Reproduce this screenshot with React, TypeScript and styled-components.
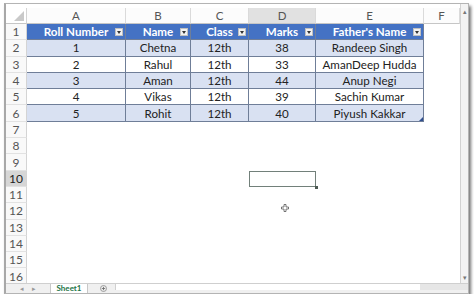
import React from "react";
import styled, { createGlobalStyle, css } from "styled-components";

const GlobalStyle = createGlobalStyle`
  html, body {
    margin: 0;
    padding: 0;
    background: #ffffff;
  }
  body {
    font-family: "Lato", "Liberation Sans", sans-serif;
  }
`;

const columns = ["A", "B", "C", "D", "E", "F"];
const headers = ["Roll Number", "Name", "Class", "Marks", "Father's Name"];
const rows = [
  ["1", "Chetna", "12th", "38", "Randeep Singh"],
  ["2", "Rahul", "12th", "33", "AmanDeep Hudda"],
  ["3", "Aman", "12th", "44", "Anup Negi"],
  ["4", "Vikas", "12th", "39", "Sachin Kumar"],
  ["5", "Rohit", "12th", "40", "Piyush Kakkar"],
];
const TOTAL_ROWS = 16;
const ACTIVE_ROW = 10;
const ACTIVE_COL = 3;

const App = () => {
  return (
    <>
      <GlobalStyle />
      <Frame>
        <Main>
          <Sheet>
            <Corner>
              <svg width="10" height="10" viewBox="0 0 10 10">
                <polygon points="10,0 10,10 0,10" fill="#c9c9c9" />
              </svg>
            </Corner>
            {columns.map((c, i) => (
              <ColHead key={c} $active={i === ACTIVE_COL}>
                {c}
              </ColHead>
            ))}

            {Array.from({ length: TOTAL_ROWS }, (_, r) => {
              const rowNo = r + 1;
              return (
                <React.Fragment key={rowNo}>
                  <RowHead $active={rowNo === ACTIVE_ROW}>{rowNo}</RowHead>
                  {columns.map((c, ci) => {
                    if (ci < 5 && rowNo === 1) {
                      return (
                        <TableCell key={c} $variant="head">
                          {headers[ci]}
                          <FilterButton>
                            <svg width="4" height="3" viewBox="0 0 4 3">
                              <polygon points="0,0 4,0 2,3" fill="#333" />
                            </svg>
                          </FilterButton>
                        </TableCell>
                      );
                    }
                    if (ci < 5 && rowNo <= 6) {
                      const data = rows[rowNo - 2];
                      return (
                        <TableCell key={c} $variant={rowNo % 2 === 0 ? "band" : "plain"}>
                          {data[ci]}
                          {ci === 4 && rowNo === 6 && <ResizeHandle />}
                        </TableCell>
                      );
                    }
                    return (
                      <EmptyCell
                        key={c}
                        $selected={rowNo === ACTIVE_ROW && ci === ACTIVE_COL}
                      >
                        {rowNo === ACTIVE_ROW && ci === ACTIVE_COL && <FillHandle />}
                      </EmptyCell>
                    );
                  })}
                </React.Fragment>
              );
            })}
          </Sheet>

          <VScroll>
            <ScrollArrow>▴</ScrollArrow>
            <ScrollArrow>▾</ScrollArrow>
          </VScroll>
        </Main>

        <TabBar>
          <TabNav>
            <span>◂</span>
            <span>▸</span>
          </TabNav>
          <SheetTab>Sheet1</SheetTab>
          <AddSheet>
            <svg width="7" height="7" viewBox="0 0 7 7">
              <circle cx="3.5" cy="3.5" r="3" fill="none" stroke="#888" strokeWidth="0.8" />
              <path d="M3.5 1.8v3.4M1.8 3.5h3.4" stroke="#666" strokeWidth="0.8" />
            </svg>
          </AddSheet>
          <HTrack />
          <HThumb />
        </TabBar>

        <Pointer>
          <svg width="8" height="8" viewBox="0 0 8 8">
            <path
              d="M3 0.5h2v2.5h2.5v2h-2.5v2.5h-2v-2.5h-2.5v-2h2.5z"
              fill="#fff"
              stroke="#555"
              strokeWidth="0.8"
            />
          </svg>
        </Pointer>
      </Frame>
    </>
  );
};

export default App;

// ======== STYLED COMPONENTS ========

const Frame = styled.div`
  position: relative;
  margin: 3px 5px 0 4px;
  height: 291px;
  border: 1px solid #b4b4b4;
  border-left: 2px solid #a8a8a8;
  box-sizing: border-box;
  display: flex;
  flex-direction: column;
  background: #fff;
  box-shadow: 2px 3px 3px rgba(0, 0, 0, 0.55);
  overflow: hidden;
`;

const Main = styled.div`
  flex: 1;
  display: flex;
  min-height: 0;
`;

const Sheet = styled.div`
  flex: 1;
  padding-top: 4px;
  display: grid;
  grid-template-columns: 21px 99px 65px 58px 67px 108px 1fr;
  grid-template-rows: 16px repeat(16, 16.3px);
  font-size: 11.6px;
  color: #222;
  overflow: hidden;
`;

const Corner = styled.div`
  display: flex;
  align-items: flex-end;
  justify-content: flex-end;
  padding: 0 2px 2px 0;
  box-sizing: border-box;
  border-right: 1px solid #d4d4d4;
  border-bottom: 1px solid #c6c6c6;
`;

const ColHead = styled.div<{ $active?: boolean }>`
  display: flex;
  align-items: center;
  justify-content: center;
  font-size: 11.5px;
  color: #555;
  border-right: 1px solid #dadada;
  border-bottom: 1px solid #c6c6c6;
  box-sizing: border-box;
  background: ${(p) => (p.$active ? "#e1e1e1" : "#fcfcfc")};
`;

const RowHead = styled.div<{ $active?: boolean }>`
  display: flex;
  align-items: center;
  justify-content: center;
  font-size: 12px;
  color: ${(p) => (p.$active ? "#222" : "#555")};
  border-right: 1px solid #d4d4d4;
  border-bottom: 1px solid #e2e2e2;
  box-sizing: border-box;
  background: ${(p) => (p.$active ? "#d6d6d6" : "#f9f9f9")};
`;

const TableCell = styled.div<{ $variant: "head" | "band" | "plain" }>`
  position: relative;
  display: flex;
  align-items: center;
  justify-content: center;
  white-space: nowrap;
  border-right: 1px solid #6f7e98;
  border-bottom: 1px solid #6f7e98;
  box-sizing: border-box;
  ${(p) =>
    p.$variant === "head" &&
    css`
      background: #4472c4;
      color: #fff;
      font-weight: 700;
    `}
  ${(p) =>
    p.$variant === "band" &&
    css`
      background: #d9e1f2;
    `}
  ${(p) =>
    p.$variant === "plain" &&
    css`
      background: #fff;
    `}
`;

const FilterButton = styled.span`
  position: absolute;
  right: 2px;
  top: 50%;
  margin-top: -4px;
  width: 8px;
  height: 8px;
  box-sizing: border-box;
  background: #f2f2f2;
  border: 1px solid #c0c0c0;
  display: flex;
  align-items: flex-end;
  justify-content: center;
  padding-bottom: 1px;
`;

const ResizeHandle = styled.span`
  position: absolute;
  right: 0;
  bottom: 0;
  width: 0;
  height: 0;
  border-left: 4px solid transparent;
  border-bottom: 4px solid #2f4f8f;
`;

const EmptyCell = styled.div<{ $selected?: boolean }>`
  position: relative;
  box-sizing: border-box;
  ${(p) =>
    p.$selected &&
    css`
      outline: 1.5px solid #72807a;
      outline-offset: -1px;
    `}
`;

const FillHandle = styled.span`
  position: absolute;
  right: -2px;
  bottom: -2px;
  width: 3px;
  height: 3px;
  background: #4d5a54;
`;

const VScroll = styled.div`
  width: 7px;
  background: #f3f3f3;
  border-left: 1px solid #d2d2d2;
  display: flex;
  flex-direction: column;
  justify-content: space-between;
  align-items: center;
  padding: 4px 0 2px;
`;

const ScrollArrow = styled.span`
  font-size: 7px;
  line-height: 7px;
  color: #777;
`;

const TabBar = styled.div`
  height: 9px;
  flex-shrink: 0;
  display: flex;
  align-items: flex-start;
  background: #f0f0f0;
  border-top: 1px solid #cfcfcf;
  overflow: hidden;
`;

const TabNav = styled.div`
  width: 44px;
  display: flex;
  justify-content: center;
  gap: 8px;
  color: #9a9a9a;
  font-size: 7px;
  line-height: 8px;
`;

const SheetTab = styled.div`
  width: 36px;
  height: 9px;
  background: #ffffff;
  border-left: 1px solid #c8c8c8;
  border-right: 1px solid #c8c8c8;
  color: #217346;
  font-weight: 700;
  font-size: 8px;
  line-height: 9px;
  text-align: center;
`;

const AddSheet = styled.div`
  margin: 1px 8px 0 12px;
  line-height: 0;
`;

const HTrack = styled.div`
  flex: 1;
  height: 6px;
  background: #fff;
  border-left: 1px solid #d0d0d0;
`;

const HThumb = styled.div`
  width: 48px;
  height: 6px;
  background: #e6e6e6;
`;

const Pointer = styled.div`
  position: absolute;
  left: 275px;
  top: 200px;
  width: 8px;
  height: 8px;
  line-height: 0;
`;
